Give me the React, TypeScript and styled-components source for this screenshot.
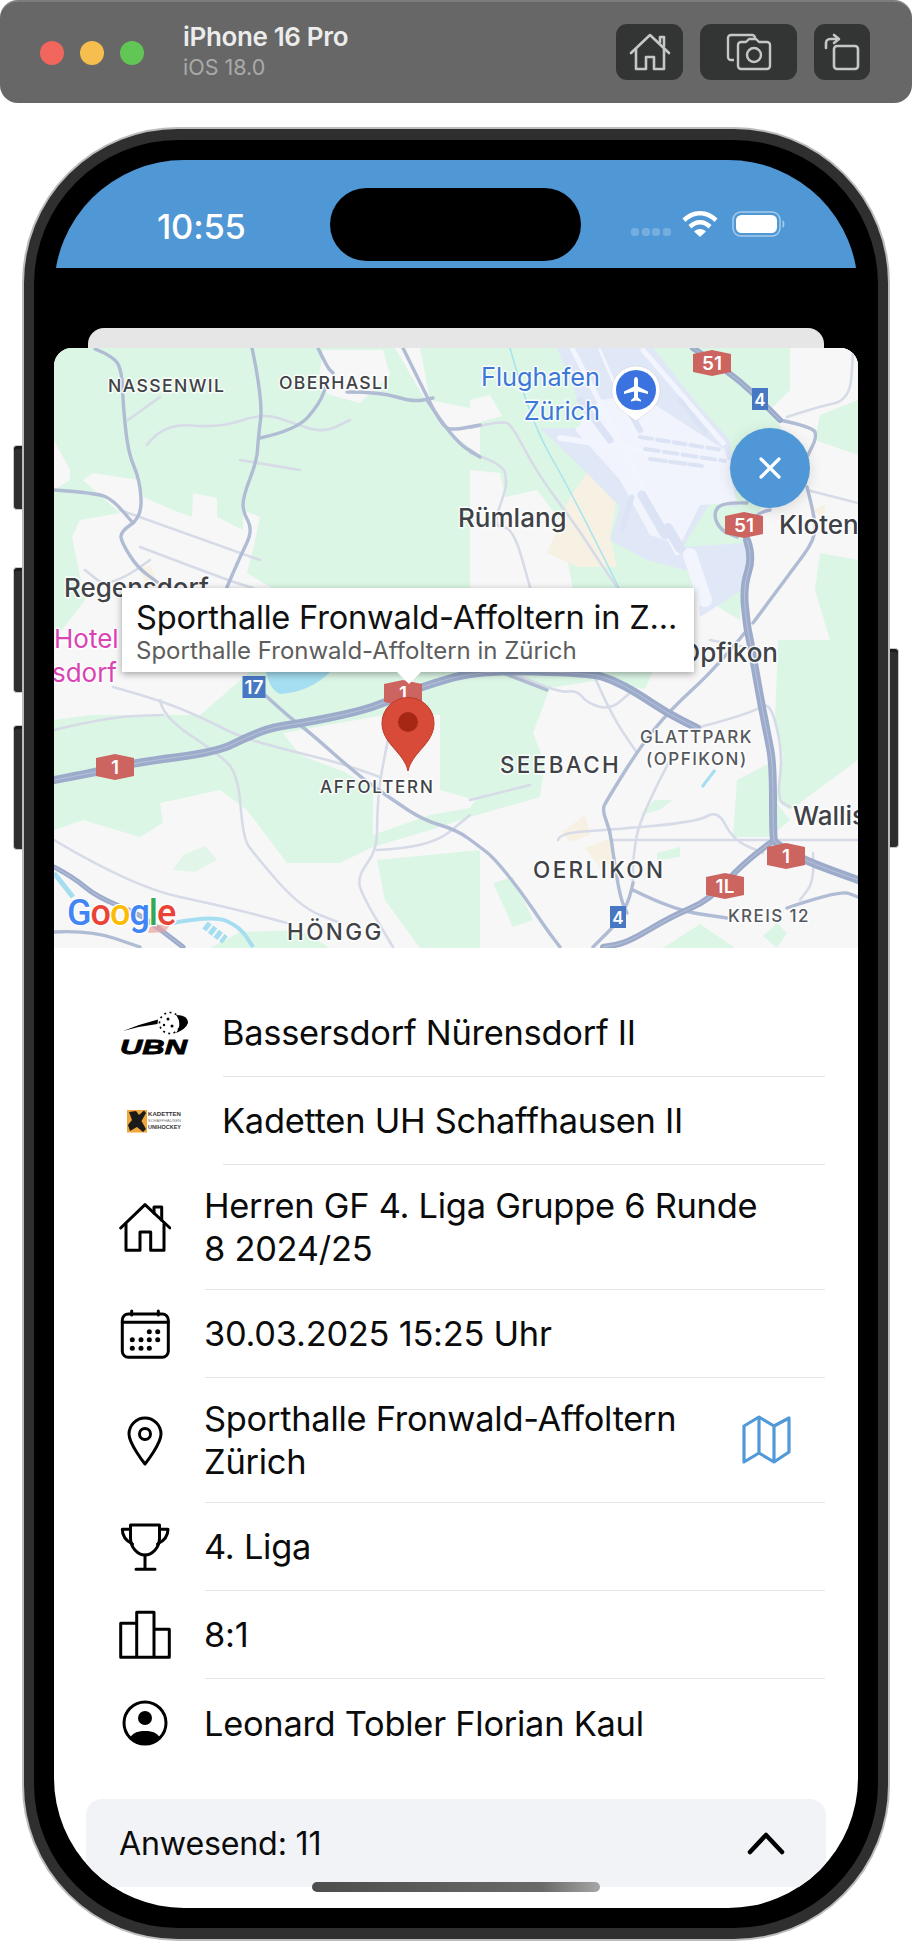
import React from "react";
import styled, { createGlobalStyle } from "styled-components";

const Global = createGlobalStyle`
  html, body { margin: 0; padding: 0; background: #fff; }
  body { width: 912px; height: 1944px; overflow: hidden; font-family: Inter, "Liberation Sans", sans-serif; }
  * { box-sizing: border-box; }
`;

const Page = styled.div`
  width: 912px;
  height: 1944px;
  display: flex;
  flex-direction: column;
`;

const Toolbar = styled.header`
  height: 103px;
  background: #666766;
  border-radius: 18px;
  border-top: 2px solid #7c7d7c;
  display: flex;
  align-items: center;
  padding: 0 42px 0 40px;
`;
const Lights = styled.div`
  display: flex;
  gap: 16px;
`;
const Light = styled.span<{ $c: string }>`
  width: 24px;
  height: 24px;
  border-radius: 50%;
  background: ${p => p.$c};
`;
const DeviceInfo = styled.div`
  margin-left: 39px;
  flex: 1;
  display: flex;
  flex-direction: column;
  gap: 3px;
  margin-top: -4px;
`;
const DeviceName = styled.div`
  font-size: 26px;
  font-weight: 600;
  line-height: 30px;
  color: #ececec;
  letter-spacing: -0.35px;
`;
const DeviceOs = styled.div`
  font-size: 21.5px;
  line-height: 24px;
  color: #a9aaa9;
`;
const ToolButtons = styled.div`
  display: flex;
  gap: 17px;
  margin-top: -2px;
`;
const ToolButton = styled.button<{ $w: number }>`
  width: ${p => p.$w}px;
  height: 56px;
  border: 0;
  padding: 0;
  border-radius: 11px;
  background: #333534;
  display: flex;
  align-items: center;
  justify-content: center;
`;

const PhoneWrap = styled.div`
  position: relative;
  margin: 24px 0 0 22px;
  width: 868px;
  height: 1814px;
`;
const SideButton = styled.span<{ $top: number; $h: number; $right?: boolean }>`
  position: absolute;
  top: ${p => p.$top}px;
  height: ${p => p.$h}px;
  width: 10px;
  background: #2e2e2e;
  border: 1.5px solid #c9c9c9;
  box-shadow: inset 0 3px 0 #1c1c1c;
  ${p =>
    p.$right
      ? "right: -9px; border-left: 0; border-radius: 0 4px 4px 0;"
      : "left: -9px; border-right: 0; border-radius: 4px 0 0 4px;"}
`;
const Frame = styled.div`
  position: relative;
  width: 100%;
  height: 100%;
  border-radius: 156px;
  background: #2f2f2f;
  border: 2px solid #bcbcbc;
  padding: 11px 10px;
`;
const Bezel = styled.div`
  width: 100%;
  height: 100%;
  border-radius: 144px;
  background: #000;
  padding: 20px;
`;
const Screen = styled.div`
  position: relative;
  width: 100%;
  height: 100%;
  border-radius: 130px;
  background: #000;
  overflow: hidden;
  display: flex;
  flex-direction: column;
`;
const StatusBar = styled.div`
  height: 108px;
  flex: none;
  background: #5097d6;
  display: flex;
  align-items: flex-start;
  color: #fff;
`;
const Clock = styled.div`
  width: 276px;
  padding: 47px 0 0 103px;
  font-size: 34.5px;
  line-height: 40px;
  font-weight: 500;
  letter-spacing: -0.2px;
  font-family: Inter, sans-serif;
`;
const Island = styled.div`
  width: 251px;
  height: 73px;
  margin-top: 28px;
  border-radius: 37px;
  background: #000;
`;
const StatusIcons = styled.div`
  margin: 51px 0 0 50px;
  display: flex;
  align-items: center;
`;
const SignalDots = styled.div`
  display: flex;
  gap: 2.5px;
  margin: 16px 11px 0 0;
`;
const SignalDot = styled.span`
  width: 8px;
  height: 8px;
  border-radius: 3px;
  background: #77aee0;
`;
const BatteryIcon = styled.svg`
  margin-left: 14px;
`;
const BackCard = styled.div`
  flex: none;
  margin: 60px 34px 0;
  height: 20px;
  background: #e6e6e6;
  border-radius: 16px 16px 0 0;
`;
const Sheet = styled.div`
  flex: 1;
  background: #fff;
  border-radius: 18px 18px 0 0;
  overflow: hidden;
  display: flex;
  flex-direction: column;
`;
const MapFrame = styled.div`
  position: relative;
  flex: none;
  height: 600px;
  overflow: hidden;
`;
const MapSvg = styled.svg`
  display: block;
  width: 804px;
  height: 600px;
`;
const MapLabel = styled.text<{ $s: number; $c?: string; $w?: number; $ls?: number; $halo?: number }>`
  font-family: Inter, sans-serif;
  font-size: ${p => p.$s}px;
  font-weight: ${p => p.$w ?? 500};
  letter-spacing: ${p => p.$ls ?? 0}px;
  fill: ${p => p.$c ?? "#3f4246"};
  stroke: #fff;
  stroke-opacity: 0.85;
  stroke-width: ${p => p.$halo ?? 3}px;
  stroke-linejoin: round;
  paint-order: stroke;
`;
const ShieldText = styled.text<{ $s?: number }>`
  font-family: Inter, sans-serif;
  font-size: ${p => p.$s ?? 18}px;
  font-weight: 600;
  fill: #fff;
  text-anchor: middle;
`;
const GoogleText = styled.text`
  font-family: Roboto, "Open Sans", sans-serif;
  font-size: 36px;
  font-weight: 500;
  stroke: #fff;
  stroke-width: 2.5px;
  paint-order: stroke;
  letter-spacing: -1px;
`;
const Callout = styled.div`
  position: absolute;
  left: 68px;
  top: 240px;
  width: 572px;
  height: 84px;
  background: #fff;
  box-shadow: 0 2px 7px rgba(0, 0, 0, 0.35);
  padding: 9px 14px 0;
  &::after {
    content: "";
    position: absolute;
    left: 274px;
    bottom: -12px;
    width: 0;
    height: 0;
    border-left: 13px solid transparent;
    border-right: 13px solid transparent;
    border-top: 13px solid #fff;
  }
`;
const CalloutTitle = styled.div`
  font-size: 32.6px;
  line-height: 40px;
  color: #111;
  white-space: nowrap;
  overflow: hidden;
  letter-spacing: -0.2px;
`;
const CalloutSub = styled.div`
  font-size: 24px;
  line-height: 27px;
  color: #5d5d5d;
  white-space: nowrap;
`;
const CloseButton = styled.button`
  position: absolute;
  left: 676px;
  top: 80px;
  width: 80px;
  height: 80px;
  border: 0;
  padding: 0;
  border-radius: 50%;
  background: #4f97d7;
  box-shadow: 0 3px 14px rgba(0, 0, 0, 0.12);
  display: flex;
  align-items: center;
  justify-content: center;
`;
const Details = styled.div`
  padding: 41px 33px 0 65px;
`;
const Row = styled.div`
  display: flex;
  align-items: stretch;
  gap: 34px;
`;
const IconCell = styled.div<{ $w?: number }>`
  flex: none;
  width: ${p => p.$w ?? 52}px;
  display: flex;
  align-items: center;
  justify-content: center;
`;
const RowBody = styled.div<{ $last?: boolean }>`
  flex: 1;
  min-height: 88px;
  padding: 19px 0;
  display: flex;
  align-items: center;
  justify-content: space-between;
  border-bottom: ${p => (p.$last ? "0" : "1.5px solid #e3e3e3")};
`;
const RowText = styled.div`
  font-size: 34.4px;
  line-height: 43px;
  color: #0b0b0b;
  letter-spacing: -0.25px;
  margin-left: -1px;
`;
const MapLink = styled.div`
  flex: none;
  margin-right: 33px;
  display: flex;
`;
const Accordion = styled.div`
  flex: none;
  margin: 32px 32px 0;
  height: 88px;
  background: #f2f3f7;
  border-radius: 16px 16px 0 0;
  display: flex;
  align-items: center;
  justify-content: space-between;
  padding: 0 41px 0 33px;
  font-size: 32.2px;
  color: #0b0b0b;
  letter-spacing: -0.2px;
`;
const HomeBar = styled.div`
  position: absolute;
  left: 258px;
  bottom: 16px;
  width: 288px;
  height: 10px;
  border-radius: 5px;
  background: linear-gradient(90deg, #4d4d4d, #6a6a6a 80%, #a6a6a6);
`;

type P = [number, number];
const smooth = (pts: P[]) => {
  let d = `M${pts[0][0]} ${pts[0][1]}`;
  for (let i = 1; i < pts.length - 1; i++) {
    const mx = (pts[i][0] + pts[i + 1][0]) / 2;
    const my = (pts[i][1] + pts[i + 1][1]) / 2;
    d += ` Q${pts[i][0]} ${pts[i][1]} ${mx} ${my}`;
  }
  const l = pts[pts.length - 1];
  return d + ` L${l[0]} ${l[1]}`;
};
const poly = (pts: P[]) => "M" + pts.map(p => p.join(" ")).join(" L") + " Z";

const URBAN: P[][] = [
  [[54, 440], [70, 470], [70, 480], [54, 490]],
  [[83, 480], [93, 473], [140, 480], [143, 497], [173, 510], [192, 517], [193, 493], [217, 498], [217, 517], [243, 530], [243, 510], [260, 517], [253, 550], [247, 573], [275, 590], [480, 590], [480, 672], [250, 672], [200, 715], [90, 715], [54, 720], [54, 640], [85, 600], [72, 537], [80, 520], [120, 513]],
  [[323, 350], [383, 350], [390, 375], [360, 403], [330, 395], [318, 385]],
  [[395, 348], [420, 348], [430, 400], [480, 410], [480, 455], [440, 425]],
  [[470, 400], [490, 395], [502, 416], [470, 425]],
  [[470, 470], [500, 473], [505, 497], [537, 490], [560, 520], [575, 600], [470, 600]],
  [[790, 348], [858, 348], [858, 400], [820, 415], [815, 440], [858, 455], [858, 640], [778, 640], [775, 722], [700, 728], [640, 700], [690, 590], [740, 620], [745, 540], [760, 510], [795, 450], [770, 410], [790, 390]],
  [[283, 733], [345, 722], [385, 715], [440, 715], [440, 790], [475, 800], [470, 808], [430, 815], [373, 835], [373, 790], [345, 772], [300, 755]],
  [[54, 830], [83, 820], [140, 837], [163, 823], [160, 803], [220, 790], [247, 810], [287, 863], [340, 863], [373, 847], [430, 830], [470, 817], [540, 797], [545, 763], [533, 733], [550, 688], [600, 680], [650, 690], [700, 690], [770, 710], [783, 755], [775, 800], [790, 810], [858, 760], [858, 948], [54, 948]],
];
const GREEN_PATCH: [P[], string][] = [
  [[[183, 855], [205, 846], [217, 860], [195, 872], [173, 870]], "#e1f6e8"],
  [[[377, 860], [480, 850], [480, 948], [420, 948], [385, 900]], "#dcf6e5"],
  [[[493, 883], [513, 877], [533, 920], [513, 927]], "#dcf6e5"],
  [[[663, 948], [700, 924], [735, 948]], "#dcf6e5"],
  [[[763, 936], [777, 923], [787, 933], [777, 948]], "#dcf6e5"],
  [[[657, 853], [680, 847], [680, 857], [657, 860]], "#dcf6e5"],
  [[[737, 780], [770, 763], [777, 803], [790, 820], [770, 837], [733, 837]], "#dcf6e5"],
  [[[820, 553], [858, 560], [858, 640], [830, 640], [815, 590]], "#dcf6e5"],
  [[[210, 948], [240, 932], [300, 930], [330, 948]], "#dcf6e5"],
  [[[640, 815], [655, 800], [672, 800], [660, 810]], "#dcf6e5"],
];
const AIRPORT: P[] = [[557, 348], [653, 348], [700, 407], [730, 440], [737, 507], [710, 503], [683, 547], [747, 543], [747, 587], [700, 617], [697, 573], [647, 560], [610, 540], [620, 507], [587, 473], [540, 428], [590, 428]];
const AIRPORT_LIGHT: P[] = [[600, 400], [640, 395], [725, 450], [737, 503], [700, 505], [680, 545], [650, 535], [620, 480], [575, 430]];
const BEIGE: P[][] = [
  [[570, 497], [587, 473], [620, 480], [610, 537], [617, 567], [577, 567], [547, 553]],
  [[562, 832], [585, 815], [590, 835], [570, 842]],
  [[585, 848], [610, 838], [617, 860], [600, 868]],
  [[140, 570], [150, 565], [155, 578], [145, 582]],
  [[812, 510], [825, 505], [825, 520]],
];
const RUNWAYS: [P[], number][] = [
  [[[573, 350], [677, 553]], 5],
  [[[643, 350], [723, 443]], 5],
  [[[560, 438], [730, 463]], 6],
  [[[600, 350], [660, 490]], 3],
  [[[690, 555], [705, 600]], 14],
];
const AIRPORT_STRIPS: [P[], number, string][] = [
  [[[640, 437], [722, 450]], 4, "12 5"],
  [[[645, 449], [725, 461]], 4, "14 5"],
  [[[650, 459], [702, 466]], 4, "16 4"],
  [[[632, 497], [622, 530]], 5, "none"],
  [[[642, 495], [665, 535]], 9, "none"],
  [[[668, 528], [680, 548]], 10, "none"],
  [[[580, 400], [610, 440]], 7, "none"],
  [[[620, 395], [640, 430]], 6, "none"],
  [[[680, 400], [705, 432]], 5, "none"],
];
const LIGHT: P[][] = [
  [[147, 445], [163, 423], [220, 428], [263, 413], [293, 423], [323, 433], [350, 420]],
  [[128, 420], [160, 397]],
  [[140, 547], [227, 580], [253, 588]],
  [[113, 687], [160, 700], [207, 720], [240, 737], [287, 750], [340, 763], [380, 777]],
  [[160, 700], [163, 717], [217, 753], [238, 773], [243, 837], [253, 853], [300, 907], [340, 923]],
  [[54, 840], [133, 887], [227, 907], [287, 923]],
  [[54, 730], [107, 717], [163, 715]],
  [[388, 740], [380, 777], [377, 817], [377, 850], [357, 877], [363, 897], [393, 947]],
  [[377, 850], [430, 848], [470, 815]],
  [[513, 673], [557, 693], [577, 690], [587, 703], [610, 710], [630, 693]],
  [[593, 673], [610, 713], [637, 753]],
  [[558, 840], [560, 833], [607, 830], [697, 822], [718, 810], [733, 840], [763, 853]],
  [[670, 760], [640, 817], [633, 857], [633, 883]],
  [[700, 727], [753, 713], [770, 700], [783, 753], [777, 800], [790, 807]],
  [[470, 800], [530, 785]],
  [[470, 428], [503, 420], [513, 427], [537, 473], [577, 527], [603, 567], [617, 587]],
  [[470, 453], [503, 463], [507, 483], [503, 497], [493, 527], [513, 527], [530, 587]],
  [[807, 490], [858, 503]],
  [[787, 417], [817, 407], [850, 400], [853, 353]],
  [[813, 853], [815, 880], [800, 900]],
  [[613, 840], [858, 840]],
  [[240, 460], [300, 470]],
  [[120, 510], [260, 560]],
  [[150, 560], [110, 590], [85, 570]],
  [[710, 640], [760, 650]],
];
const MEDIUM: P[][] = [
  [[95, 349], [115, 357], [122, 373], [123, 403], [128, 453], [140, 480], [142, 517], [120, 532], [122, 543], [137, 567], [157, 582]],
  [[252, 348], [263, 400], [258, 440], [257, 460], [243, 497], [243, 512], [253, 530], [240, 557], [227, 587]],
  [[54, 490], [97, 493], [113, 500], [133, 523]],
  [[260, 438], [297, 430], [320, 403], [327, 383]],
  [[318, 348], [327, 367], [333, 373]],
  [[403, 348], [427, 397], [443, 427], [453, 430], [480, 425]],
  [[427, 400], [453, 440], [480, 457]],
  [[347, 392], [380, 392], [413, 402], [433, 398]],
  [[265, 695], [290, 718], [307, 730], [360, 777], [393, 800], [423, 820], [457, 830], [480, 847], [493, 857], [520, 890], [547, 930], [560, 947]],
  [[503, 673], [547, 690]],
  [[747, 630], [717, 667], [670, 710], [640, 747], [607, 800], [602, 810], [610, 830], [613, 853], [620, 897], [627, 913]],
  [[633, 883], [627, 913], [593, 947]],
  [[633, 890], [673, 910], [727, 918]],
  [[787, 908], [840, 890], [858, 897]],
  [[807, 487], [813, 510], [817, 537], [790, 573], [753, 623]],
  [[747, 503], [723, 502], [713, 513], [720, 530], [737, 537]],
  [[770, 510], [753, 513], [747, 540]],
  [[54, 932], [90, 930], [140, 947]],
  [[780, 420], [813, 427], [817, 437], [807, 457]],
];
const HIGHWAY: [P[], number][] = [
  [[[54, 780], [97, 772], [133, 763], [217, 752], [247, 737], [273, 727], [303, 723], [357, 712], [387, 702], [420, 687], [480, 670], [590, 673], [613, 680], [637, 693], [667, 713], [697, 728]], 8],
  [[[693, 348], [730, 373], [753, 393], [773, 413], [780, 420]], 6],
  [[[747, 540], [753, 557], [743, 587], [747, 627], [750, 640], [760, 697], [767, 733], [773, 763], [773, 837], [775, 843], [803, 860], [858, 880]], 8],
  [[[770, 843], [743, 863], [710, 900], [670, 917], [627, 943], [603, 947]], 6],
  [[[54, 867], [73, 877], [97, 897], [137, 913], [157, 927], [183, 947]], 5],
];
const RED_SHIELDS: [number, number, string, number][] = [
  [712, 363, "51", 19],
  [744, 525, "51", 19],
  [115, 767, "1", 19],
  [403, 693, "1", 19],
  [786, 856, "1", 19],
  [725, 886, "1L", 19],
];
const BLUE_SHIELDS: [number, number, string, number][] = [
  [760, 399, "4", 17],
  [254, 687, "17", 19],
  [618, 917, "4", 17],
];

const MapDrawing = () => (
  <MapSvg viewBox="54 348 804 600">
    <rect x="54" y="348" width="804" height="600" fill="#dbf6e5" />
    {URBAN.map((u, i) => (
      <path key={i} d={poly(u)} fill="#f7f7f8" />
    ))}
    {GREEN_PATCH.map(([u, c], i) => (
      <path key={i} d={poly(u)} fill={c} />
    ))}
    {BEIGE.map((u, i) => (
      <path key={i} d={poly(u)} fill="#f7f1e4" />
    ))}
    <path d={poly(AIRPORT)} fill="#e0e7f6" />
    <path d={poly(AIRPORT_LIGHT)} fill="#f1f4fc" />
    {RUNWAYS.map(([u, w], i) => (
      <path key={i} d={smooth(u)} stroke="#f2f5fd" strokeWidth={w} fill="none" strokeLinecap="round" />
    ))}
    {AIRPORT_STRIPS.map(([u, w, dash], i) => (
      <path key={i} d={smooth(u)} stroke="#dbe3f4" strokeWidth={w} strokeDasharray={dash} fill="none" strokeLinecap="round" />
    ))}
    <path d={smooth([[173, 923], [213, 915], [240, 927], [253, 947]])} stroke="#a5def0" strokeWidth="4" fill="none" />
    <path d={smooth([[54, 873], [73, 897]])} stroke="#a5def0" strokeWidth="5" fill="none" />
    <path d={smooth([[205, 925], [225, 940]])} stroke="#a5def0" strokeWidth="9" strokeDasharray="5 2" fill="none" />
    <path d="M266 672 H330 Q310 692 280 694 Q270 690 266 672Z" fill="#a5def0" />
    <path d={smooth([[510, 348], [530, 420], [570, 490], [620, 590]])} stroke="#a5e3ee" strokeWidth="1.5" fill="none" />
    <path d={smooth([[702, 787], [715, 770]])} stroke="#a5def0" strokeWidth="3" fill="none" />
    {LIGHT.map((u, i) => (
      <path key={i} d={smooth(u)} stroke="#d6dbe7" strokeWidth="2.6" fill="none" strokeLinecap="round" />
    ))}
    {MEDIUM.map((u, i) => (
      <path key={i} d={smooth(u)} stroke="#b0bbd4" strokeWidth="3.4" fill="none" strokeLinecap="round" />
    ))}
    {HIGHWAY.map(([u, w], i) => (
      <g key={i}>
        <path d={smooth(u)} stroke="#9dabcb" strokeWidth={w} fill="none" strokeLinecap="round" />
        <path d={smooth(u)} stroke="#b7c2da" strokeWidth="1" fill="none" />
      </g>
    ))}

    {RED_SHIELDS.map(([x, y, t, s], i) => (
      <g key={i}>
        <path d={`M${x - 19} ${y - 9} L${x} ${y - 13} L${x + 19} ${y - 9} V${y + 9} L${x} ${y + 13} L${x - 19} ${y + 9} Z`} fill="#cc6460" />
        <ShieldText x={x} y={y + 7} $s={s}>{t}</ShieldText>
      </g>
    ))}
    {BLUE_SHIELDS.map(([x, y, t, s], i) => {
      const w = t.length > 1 ? 23 : 16;
      return (
        <g key={i}>
          <rect x={x - w / 2} y={y - 11} width={w} height={22} fill="#4878c4" />
          <ShieldText x={x} y={y + 7} $s={s}>{t}</ShieldText>
        </g>
      );
    })}

    <MapLabel x="108" y="392" $s={17.6} $ls={1.4}>NASSENWIL</MapLabel>
    <MapLabel x="279" y="389" $s={17.6} $ls={1.3}>OBERHASLI</MapLabel>
    <MapLabel x="600" y="386" textAnchor="end" $s={25.3} $c="#3c78d8" $w={400}>Flughafen</MapLabel>
    <MapLabel x="600" y="420" textAnchor="end" $s={25.3} $c="#3c78d8" $w={400}>Zürich</MapLabel>
    <MapLabel x="458" y="527" $s={26}>Rümlang</MapLabel>
    <MapLabel x="779" y="534" $s={26}>Kloten</MapLabel>
    <MapLabel x="64" y="597" $s={26}>Regensdorf</MapLabel>
    <MapLabel x="54" y="648" $s={26} $c="#d944b4" $w={400}>Hotel</MapLabel>
    <MapLabel x="117" y="682" textAnchor="end" $s={26} $c="#d944b4" $w={400}>sdorf</MapLabel>
    <MapLabel x="778" y="662" textAnchor="end" $s={26}>Opfikon</MapLabel>
    <MapLabel x="500" y="773" $s={22.4} $ls={2.4}>SEEBACH</MapLabel>
    <MapLabel x="640" y="743" $s={17} $ls={1.5} $c="#55585c">GLATTPARK</MapLabel>
    <MapLabel x="646" y="765" $s={17} $ls={1.5} $c="#55585c">(OPFIKON)</MapLabel>
    <MapLabel x="320" y="793" $s={17} $ls={1.8}>AFFOLTERN</MapLabel>
    <MapLabel x="793" y="825" $s={26}>Wallis</MapLabel>
    <MapLabel x="533" y="878" $s={22.5} $ls={2.4}>OERLIKON</MapLabel>
    <MapLabel x="728" y="922" $s={17} $ls={1.4} $c="#55585c">KREIS 12</MapLabel>
    <MapLabel x="287" y="940" $s={22.5} $ls={2.4}>HÖNGG</MapLabel>

    {/* airport pin */}
    <path d="M636 421 C628 414 612 408 612 390 A24 24 0 0 1 660 390 C660 408 644 414 636 421Z" fill="#fff" stroke="#000" strokeOpacity="0.08" />
    <circle cx="636" cy="390" r="20" fill="#3a72e0" />
    <path d="M636 377 C637.6 377 638 379 638 381 V386.5 L648 391.5 V394 L638 391.5 V397.5 L641 400 V401.5 L636 400.5 L631 401.5 V400 L634 397.5 V391.5 L624 394 V391.5 L634 386.5 V381 C634 379 634.4 377 636 377Z" fill="#fff" />

    {/* place pin */}
    <path d="M408 771 C404 752 382 744 382 723 A26 25.5 0 0 1 434 723 C434 744 412 752 408 771Z" fill="#d94b39" stroke="#b93b2a" strokeWidth="1" />
    <circle cx="408" cy="722" r="10" fill="#a52714" />

    <path d="M150 927 L172 922 L165 932 L148 933Z" fill="#e8a0a0" opacity="0.7" />
    <GoogleText x="67" y="925">
      <tspan fill="#4285f4">G</tspan>
      <tspan fill="#ea4335">o</tspan>
      <tspan fill="#fbbc05">o</tspan>
      <tspan fill="#4285f4">g</tspan>
      <tspan fill="#34a853">l</tspan>
      <tspan fill="#ea4335">e</tspan>
    </GoogleText>
  </MapSvg>
);

const Ic = ({ children }: { children: React.ReactNode }) => (
  <svg width="52" height="52" viewBox="0 0 52 52" fill="none" stroke="#000" strokeWidth="3" strokeLinecap="round" strokeLinejoin="round">
    {children}
  </svg>
);

const UbnLogo = () => (
  <svg width="70" height="44" viewBox="119 1012 70 44">
    <path d="M123 1032 Q140 1025 158 1020.5 L157.5 1025 Q140 1027 123 1032Z" fill="#000" />
    <circle cx="170" cy="1024" r="10.5" fill="none" stroke="#000" strokeWidth="1.6" strokeDasharray="2 3.4" />
    <circle cx="168" cy="1020" r="1.5" /><circle cx="172" cy="1027" r="1.5" /><circle cx="164" cy="1026" r="1.2" />
    <path d="M176 1016 Q188 1016 188 1024 Q186 1030 176 1034 Q183 1025 176 1016Z" fill="#000" />
    <text x="120" y="1055" fontFamily="Liberation Sans, sans-serif" fontWeight="700" fontStyle="italic" fontSize="21" textLength="67" lengthAdjust="spacingAndGlyphs" stroke="#000" strokeWidth="0.8">UBN</text>
  </svg>
);

const KadettenLogo = () => (
  <svg width="56" height="24" viewBox="126 1110 56 24">
    <rect x="127" y="1111" width="20" height="22.5" fill="#f0a63a" />
    <path d="M129 1113 L136 1112 L139 1116 L144 1111.5 L146 1114 L141.5 1122 L146 1130 L143 1133 L137 1128 L130 1132 L128 1126 L132 1121Z" fill="#1b1b1b" />
    <text x="148" y="1117" fontFamily="Liberation Sans, sans-serif" fontWeight="700" fontSize="6" textLength="33" lengthAdjust="spacingAndGlyphs" fill="#333">KADETTEN</text>
    <text x="148" y="1122.5" fontFamily="Liberation Sans, sans-serif" fontSize="3.6" textLength="33" lengthAdjust="spacingAndGlyphs" fill="#777">SCHAFFHAUSEN</text>
    <text x="148" y="1129.5" fontFamily="Liberation Sans, sans-serif" fontWeight="700" fontSize="5.4" textLength="33" lengthAdjust="spacingAndGlyphs" fill="#333">UNIHOCKEY</text>
  </svg>
);

const HouseIcon = () => (
  <Ic>
    <path d="M1.7 26 L26 2.7 L51 26" />
    <path d="M7 22 V48.3 H21 V30 H31.7 V48.3 H45 V22" />
    <path d="M35 11 V5 H42.7 V18" />
  </Ic>
);
const CalendarIcon = () => (
  <Ic>
    <rect x="3.3" y="6" width="46" height="43.3" rx="6" />
    <path d="M3.3 14.3 H49.3 M12.7 3 V7 M39.3 3 V7" />
    <g fill="#000" stroke="none">
      {[[30.3, 23.7], [38.7, 23.7], [13.3, 31.7], [22, 31.7], [30.3, 31.7], [38.7, 31.7], [13.3, 40.3], [22, 40.3], [30.3, 40.3]].map(([x, y], i) => (
        <circle key={i} cx={x} cy={y} r="2.5" />
      ))}
    </g>
  </Ic>
);
const PinIcon = () => (
  <Ic>
    <path d="M26 49 C26 49 10 29 10 19 A16 16 0 0 1 42 19 C42 29 26 49 26 49Z" />
    <circle cx="26" cy="19" r="5.5" />
  </Ic>
);
const TrophyIcon = () => (
  <Ic>
    <path d="M11.5 4 H40.5 V17 C40.5 27 33 34 26 34 C19 34 11.5 27 11.5 17Z" />
    <path d="M26 34 V48.3 M17 48.3 H36" />
    <path d="M11.5 8.3 H3.3 C3.3 15 7 20 13.5 23 M40.5 8.3 H49 C49 15 45 20 38.5 23" />
  </Ic>
);
const BarsIcon = () => (
  <Ic>
    <path d="M17.7 48.3 H1.7 V14.3 H17.7 M17.7 48.3 V3.3 H35 V48.3 Z M35 20.3 H50.3 V48.3 H35" />
  </Ic>
);
const UserIcon = () => (
  <Ic>
    <circle cx="26" cy="26" r="21" />
    <circle cx="26" cy="21" r="7" fill="#000" stroke="none" />
    <path d="M11 41 C14 35 20 34 26 34 C32 34 38 35 41 41 A21 21 0 0 1 11 41Z" fill="#000" stroke="none" />
  </Ic>
);

const App = () => (
  <Page>
    <Global />
    <Toolbar>
      <Lights>
        <Light $c="#f2675d" />
        <Light $c="#f6be4f" />
        <Light $c="#61c655" />
      </Lights>
      <DeviceInfo>
        <DeviceName>iPhone 16 Pro</DeviceName>
        <DeviceOs>iOS 18.0</DeviceOs>
      </DeviceInfo>
      <ToolButtons>
        <ToolButton $w={67}>
          <svg width="42" height="38" viewBox="0 0 42 38" fill="none" stroke="#c6c6c6" strokeWidth="2.6" strokeLinejoin="round" strokeLinecap="round">
            <path d="M2 20 L21 2 L40 20" />
            <path d="M7 16 V36 H17 V24 H25 V36 H35 V16" />
            <path d="M31 9 V4 H35 V13" />
          </svg>
        </ToolButton>
        <ToolButton $w={97}>
          <svg width="46" height="38" viewBox="0 0 46 38" fill="none" stroke="#c6c6c6" strokeWidth="2.4" strokeLinejoin="round">
            <path d="M8 27 H5 A3 3 0 0 1 2 24 V5 A3 3 0 0 1 5 2 H26 A3 3 0 0 1 29 5 V7" />
            <path d="M12 12 A3 3 0 0 1 15 9 H20 L23 6 H30 L33 9 H41 A3 3 0 0 1 44 12 V33 A3 3 0 0 1 41 36 H15 A3 3 0 0 1 12 33Z" />
            <circle cx="28" cy="22" r="7" />
          </svg>
        </ToolButton>
        <ToolButton $w={56}>
          <svg width="36" height="38" viewBox="0 0 36 38" fill="none" stroke="#c6c6c6" strokeWidth="2.6" strokeLinejoin="round" strokeLinecap="round">
            <rect x="10" y="13" width="24" height="23" rx="3" />
            <path d="M2 15 V10 A4 4 0 0 1 6 6 H14 M10 2 L15 6 L10 10" />
          </svg>
        </ToolButton>
      </ToolButtons>
    </Toolbar>
    <PhoneWrap>
      <SideButton $top={318} $h={65} />
      <SideButton $top={440} $h={126} />
      <SideButton $top={598} $h={125} />
      <SideButton $right $top={521} $h={200} />
      <Frame>
        <Bezel>
          <Screen>
            <StatusBar>
              <Clock>10:55</Clock>
              <Island />
              <StatusIcons>
                <SignalDots>
                  <SignalDot /><SignalDot /><SignalDot /><SignalDot />
                </SignalDots>
                <svg width="36" height="26" viewBox="0 0 36 26" fill="#fff">
                  <path d="M18 0 C25 0 31 3 35.5 7.5 L32.5 11 C28.5 7 23.500 4.500 18 4.500 C12.500 4.500 7.500 7 3.500 11 L0.500 7.500 C5 3 11 0 18 0Z" />
                  <path d="M18 9 C22.500 9 26.500 11 29.500 14 L26.500 17.500 C24 15 21 13.500 18 13.500 C15 13.500 12 15 9.500 17.500 L6.500 14 C9.500 11 13.500 9 18 9Z" />
                  <path d="M18 18 C20.500 18 22.500 19 24 20.500 L18 26 L12 20.500 C13.500 19 15.500 18 18 18Z" />
                </svg>
                <BatteryIcon width="54" height="26" viewBox="0 0 54 26">
                  <rect x="1" y="1" width="47" height="24" rx="8" fill="none" stroke="#a5cbec" strokeWidth="1.5" />
                  <rect x="4" y="4" width="41" height="18" rx="5.500" fill="#fff" />
                  <path d="M50.500 9 C52 10 52.500 11.500 52.500 13 C52.500 14.500 52 16 50.500 17Z" fill="#a5cbec" />
                </BatteryIcon>
              </StatusIcons>
            </StatusBar>
            <BackCard />
            <Sheet>
              <MapFrame>
                <MapDrawing />
                <Callout>
                  <CalloutTitle>Sporthalle Fronwald-Affoltern in Z...</CalloutTitle>
                  <CalloutSub>Sporthalle Fronwald-Affoltern in Zürich</CalloutSub>
                </Callout>
                <CloseButton>
                  <svg width="24" height="24" viewBox="0 0 24 24" stroke="#fff" strokeWidth="3.200" strokeLinecap="round">
                    <path d="M3 3 L21 21 M21 3 L3 21" />
                  </svg>
                </CloseButton>
              </MapFrame>
              <Details>
                <Row>
                  <IconCell $w={70}><UbnLogo /></IconCell>
                  <RowBody><RowText>Bassersdorf Nürensdorf II</RowText></RowBody>
                </Row>
                <Row>
                  <IconCell $w={70}><KadettenLogo /></IconCell>
                  <RowBody><RowText>Kadetten UH Schaffhausen II</RowText></RowBody>
                </Row>
                <Row>
                  <IconCell><HouseIcon /></IconCell>
                  <RowBody><RowText>Herren GF 4. Liga Gruppe 6 Runde<br />8 2024/25</RowText></RowBody>
                </Row>
                <Row>
                  <IconCell><CalendarIcon /></IconCell>
                  <RowBody><RowText>30.03.2025 15:25 Uhr</RowText></RowBody>
                </Row>
                <Row>
                  <IconCell><PinIcon /></IconCell>
                  <RowBody>
                    <RowText>Sporthalle Fronwald-Affoltern<br />Zürich</RowText>
                    <MapLink>
                      <svg width="50" height="50" viewBox="0 0 50 50" fill="none" stroke="#5299d8" strokeWidth="3.200" strokeLinejoin="round" strokeLinecap="round">
                        <path d="M2 11 L17 2 L32 11 L47 3 V37 L32 47 L17 38 L2 47 Z M17 2 V38 M32 11 V47" />
                      </svg>
                    </MapLink>
                  </RowBody>
                </Row>
                <Row>
                  <IconCell><TrophyIcon /></IconCell>
                  <RowBody><RowText>4. Liga</RowText></RowBody>
                </Row>
                <Row>
                  <IconCell><BarsIcon /></IconCell>
                  <RowBody><RowText>8:1</RowText></RowBody>
                </Row>
                <Row>
                  <IconCell><UserIcon /></IconCell>
                  <RowBody $last><RowText>Leonard Tobler Florian Kaul</RowText></RowBody>
                </Row>
              </Details>
              <Accordion>
                <span>Anwesend: 11</span>
                <svg width="38" height="24" viewBox="0 0 38 24" fill="none" stroke="#000" strokeWidth="4.5" strokeLinecap="round" strokeLinejoin="round">
                  <path d="M3 21 L19 4 L35 21" />
                </svg>
              </Accordion>
            </Sheet>
            <HomeBar />
          </Screen>
        </Bezel>
      </Frame>
    </PhoneWrap>
  </Page>
);

export default App;
